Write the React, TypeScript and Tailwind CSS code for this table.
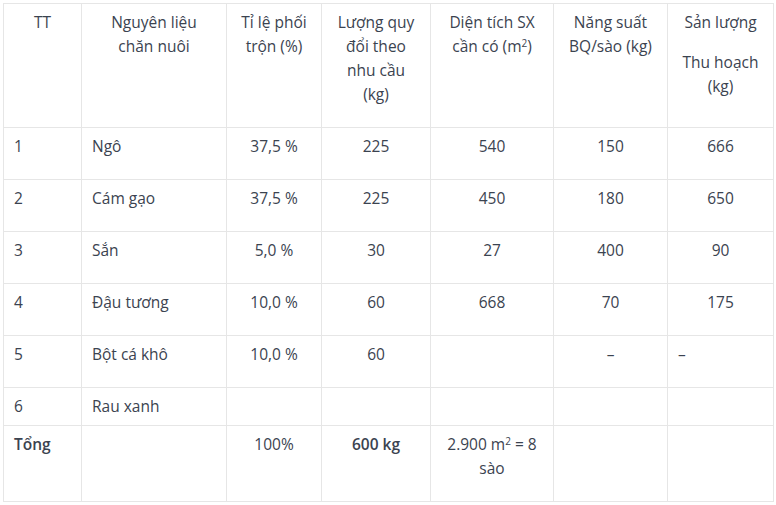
import React from "react";

const cell = "border border-[#e6e6e6] align-top pt-[6px] px-[10px]";

export default function App() {
  const rows: { tt: string; name: string; a: string; b: string; c: string; d: string; e: string; eLeft?: boolean }[] = [
    { tt: "1", name: "Ngô", a: "37,5 %", b: "225", c: "540", d: "150", e: "666" },
    { tt: "2", name: "Cám gạo", a: "37,5 %", b: "225", c: "450", d: "180", e: "650" },
    { tt: "3", name: "Sắn", a: "5,0 %", b: "30", c: "27", d: "400", e: "90" },
    { tt: "4", name: "Đậu tương", a: "10,0 %", b: "60", c: "668", d: "70", e: "175" },
    { tt: "5", name: "Bột cá khô", a: "10,0 %", b: "60", c: "", d: "–", e: "–", eLeft: true },
  ];
  return (
    <div className="bg-white w-[776px] h-[505px] p-[3px]" style={{ fontFamily: "'Open Sans', sans-serif" }}>
      <table className="border-collapse w-[770px] table-fixed text-[15.5px] leading-[24px] text-[#3b4350]">
        <colgroup>
          <col className="w-[78px]" />
          <col className="w-[145px]" />
          <col className="w-[95px]" />
          <col className="w-[109px]" />
          <col className="w-[123px]" />
          <col className="w-[114px]" />
          <col className="w-[106px]" />
        </colgroup>
        <tbody>
          <tr>
            <td className={`${cell} pb-[21px] text-center`}>TT</td>
            <td className={`${cell} pb-[21px] text-center`}>Nguyên liệu<br />chăn nuôi</td>
            <td className={`${cell} pb-[21px] text-center`}>Tỉ lệ phối<br />trộn (%)</td>
            <td className={`${cell} pb-[21px] text-center`}>Lượng quy<br />đổi theo<br />nhu cầu<br />(kg)</td>
            <td className={`${cell} pb-[21px] text-center`}>Diện tích SX<br />cần có (m<sup className="text-[10px]">2</sup>)</td>
            <td className={`${cell} pb-[21px] text-center`}>Năng suất<br />BQ/sào (kg)</td>
            <td className={`${cell} pb-[21px] text-center`}>
              <div className="mb-[16px]">Sản lượng</div>
              <div>Thu hoạch<br />(kg)</div>
            </td>
          </tr>
          {rows.map((r) => (
            <tr key={r.tt}>
              <td className={`${cell} pb-[21px]`}>{r.tt}</td>
              <td className={`${cell} pb-[21px]`}>{r.name}</td>
              <td className={`${cell} pb-[21px] text-center`}>{r.a}</td>
              <td className={`${cell} pb-[21px] text-center`}>{r.b}</td>
              <td className={`${cell} pb-[21px] text-center`}>{r.c}</td>
              <td className={`${cell} pb-[21px] text-center`}>{r.d}</td>
              <td className={`${cell} pb-[21px] ${r.eLeft ? "text-left" : "text-center"}`}>{r.e}</td>
            </tr>
          ))}
          <tr>
            <td className={`${cell} pb-[7px]`}>6</td>
            <td className={`${cell} pb-[7px]`}>Rau xanh</td>
            <td className={`${cell} pb-[7px]`}></td>
            <td className={`${cell} pb-[7px]`}></td>
            <td className={`${cell} pb-[7px]`}></td>
            <td className={`${cell} pb-[7px]`}></td>
            <td className={`${cell} pb-[7px]`}></td>
          </tr>
          <tr>
            <td className={`${cell} pb-[21px] font-semibold`}>Tổng</td>
            <td className={`${cell} pb-[21px]`}></td>
            <td className={`${cell} pb-[21px] text-center`}>100%</td>
            <td className={`${cell} pb-[21px] text-center font-semibold`}>600 kg</td>
            <td className={`${cell} pb-[21px] text-center`}>2.900 m<sup className="text-[10px]">2</sup> = 8<br />sào</td>
            <td className={`${cell} pb-[21px]`}></td>
            <td className={`${cell} pb-[21px]`}></td>
          </tr>
        </tbody>
      </table>
    </div>
  );
}
